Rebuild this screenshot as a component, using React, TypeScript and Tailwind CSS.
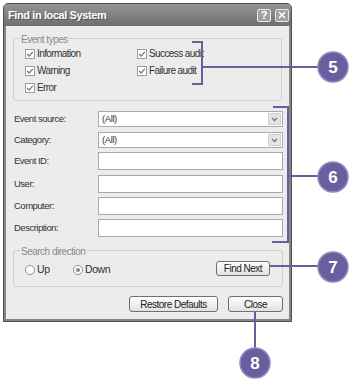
import React from 'react';

const font = "font-['Liberation_Sans',Arial,sans-serif]";

const CheckBox: React.FC<{ label: string }> = ({ label }) => (
  <div className="flex items-center h-[17px]">
    <div className="w-[10px] h-[10px] border border-[#9c9c9c] bg-white flex items-center justify-center">
      <svg width="8" height="8" viewBox="0 0 8 8">
        <path d="M1.2 4 L3.2 6 L6.8 1.8" fill="none" stroke="#7a7a7a" strokeWidth="1.3" />
      </svg>
    </div>
    <span className="ml-[2px] text-[10px] tracking-[-0.6px] text-[#333]">{label}</span>
  </div>
);

const Combo: React.FC = () => (
  <div className="w-[185px] h-[16px] bg-white border border-[#a9a9a9] flex items-center justify-between pl-[3px] pr-[1px]">
    <span className="text-[9.5px] tracking-[-0.4px] text-[#333]">(All)</span>
    <div className="w-[13px] h-[12px] bg-[#e4e4e4] border border-[#d0d0d0] flex items-center justify-center">
      <svg width="7" height="5" viewBox="0 0 7 5">
        <path d="M1 1 L3.5 3.5 L6 1" fill="none" stroke="#777" strokeWidth="1.3" />
      </svg>
    </div>
  </div>
);

const TextBox: React.FC = () => (
  <div className="w-[185px] h-[18px] bg-white border border-[#a9a9a9]" />
);

const Field: React.FC<{ label: string; mt: string; children: React.ReactNode }> = ({ label, mt, children }) => (
  <div className={`flex items-center pl-[8px] ${mt}`}>
    <span className="w-[84px] text-[9.5px] tracking-[-0.5px] text-[#333]">{label}</span>
    {children}
  </div>
);

const XpButton: React.FC<{ label: string; w: string; h?: string }> = ({ label, w, h = 'h-[16px]' }) => (
  <div
    className={`${w} ${h} rounded-[3px] border border-[#6f6f6f] bg-gradient-to-b from-white to-[#e2e2e2] flex items-center justify-center text-[10px] tracking-[-0.5px] text-[#222]`}
  >
    {label}
  </div>
);

const Radio: React.FC<{ label: string; checked?: boolean }> = ({ label, checked }) => (
  <div className="flex items-center">
    <div className="w-[10px] h-[10px] rounded-full border border-[#8f8f8f] bg-white flex items-center justify-center">
      {checked && <div className="w-[4px] h-[4px] rounded-full bg-[#8a8a8a]" />}
    </div>
    <span className="ml-[2px] text-[10.5px] tracking-[-0.4px] text-[#333]">{label}</span>
  </div>
);

const Callout: React.FC<{ cx: number; cy: number; n: string }> = ({ cx, cy, n }) => (
  <g>
    <circle cx={cx} cy={cy} r="15" fill="#6b5e9f" stroke="#9088c0" strokeWidth="1.5" />
    <text
      x={cx}
      y={cy + 6}
      textAnchor="middle"
      fill="white"
      fontSize="17"
      fontWeight="bold"
      fontFamily="'Liberation Sans',sans-serif"
    >
      {n}
    </text>
  </g>
);

export default function App() {
  return (
    <div className={`relative w-[350px] h-[382px] bg-white overflow-hidden pt-[3px] pl-[3px] ${font}`}>
      {/* dialog */}
      <div className="w-[289px] h-[319px] flex flex-col rounded-t-[5px] border border-[#4f4f4f] bg-[#858585]">
        <div className="h-[22px] flex items-center justify-between pl-[4px] pr-[2px] bg-gradient-to-b from-[#949494] to-[#707070] rounded-t-[4px]">
          <span className="text-[11px] font-bold text-white tracking-[-0.4px] [text-shadow:1px_1px_0_#555]">
            Find in local System
          </span>
          <div className="flex gap-[4px]">
            <div className="w-[14px] h-[13px] rounded-[2px] border border-[#e8e8e8] bg-[#a0a0a0] flex items-center justify-center text-white text-[11px] font-bold">
              ?
            </div>
            <div className="w-[14px] h-[13px] rounded-[2px] border border-[#e8e8e8] bg-[#a0a0a0] flex items-center justify-center">
              <svg width="8" height="8" viewBox="0 0 8 8">
                <path d="M1 1 L7 7 M7 1 L1 7" stroke="white" strokeWidth="1.6" />
              </svg>
            </div>
          </div>
        </div>

        <div className="flex-1 mx-[2px] mb-[2px] bg-[#ececec] flex flex-col">
          {/* Event types */}
          <div className="relative mt-[12px] ml-[7px] w-[269px] h-[63px] border border-[#cfcfcf] rounded-[3px] pt-[6px] pl-[11px]">
            <span className="absolute -top-[7px] left-[6px] px-[1px] bg-[#ececec] text-[10px] tracking-[-0.5px] text-[#8a8a8a]">
              Event types
            </span>
            <div className="flex">
              <div className="w-[112px]">
                <CheckBox label="Information" />
                <CheckBox label="Warning" />
                <CheckBox label="Error" />
              </div>
              <div>
                <CheckBox label="Success audit" />
                <CheckBox label="Failure audit" />
              </div>
            </div>
          </div>

          {/* Fields */}
          <Field label="Event source:" mt="mt-[10px]">
            <Combo />
          </Field>
          <Field label="Category:" mt="mt-[5px]">
            <Combo />
          </Field>
          <Field label="Event ID:" mt="mt-[4px]">
            <TextBox />
          </Field>
          <Field label="User:" mt="mt-[5px]">
            <TextBox />
          </Field>
          <Field label="Computer:" mt="mt-[4px]">
            <TextBox />
          </Field>
          <Field label="Description:" mt="mt-[4px]">
            <TextBox />
          </Field>

          {/* Search direction */}
          <div className="relative mt-[13px] ml-[7px] w-[270px] h-[37px] border border-[#cfcfcf] rounded-[3px] flex items-center pl-[11px] pr-[12px] pt-[3px]">
            <span className="absolute -top-[7px] left-[6px] px-[1px] bg-[#ececec] text-[10px] tracking-[-0.5px] text-[#8a8a8a]">
              Search direction
            </span>
            <div className="w-[48px]">
              <Radio label="Up" />
            </div>
            <Radio label="Down" checked />
            <div className="ml-auto -mt-[3px]">
              <XpButton label="Find Next" w="w-[54px]" h="h-[15px]" />
            </div>
          </div>

          {/* Bottom buttons */}
          <div className="mt-[9px] flex justify-end gap-[10px] pr-[6px]">
            <XpButton label="Restore Defaults" w="w-[89px]" />
            <XpButton label="Close" w="w-[55px]" />
          </div>
        </div>
      </div>

      {/* callouts */}
      <svg className="absolute left-0 top-0 pointer-events-none" width="350" height="382" viewBox="0 0 350 382">
        <g fill="none" stroke="#6b5e9f" strokeWidth="2">
          <path d="M192 42 H202 V84 H192" />
          <path d="M202 67 H320" />
          <path d="M273 107 H288 V242 H272" />
          <path d="M288 176 H320" />
          <path d="M270 266 H320" />
          <path d="M255 312 V350" />
        </g>
        <Callout cx={333} cy={67} n="5" />
        <Callout cx={333} cy={177} n="6" />
        <Callout cx={333} cy={267} n="7" />
        <Callout cx={255} cy={363} n="8" />
      </svg>
    </div>
  );
}
